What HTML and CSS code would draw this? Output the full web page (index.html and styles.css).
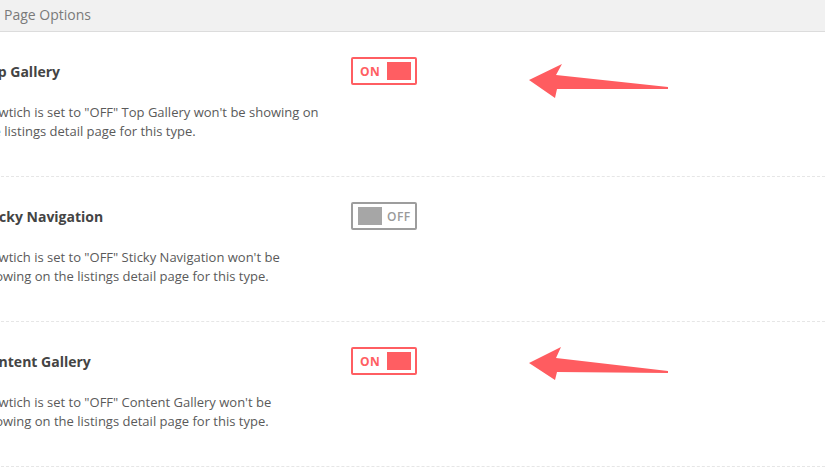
FILE: index.html
```html
<!DOCTYPE html>
<html>
<head>
<meta charset="utf-8">
<link rel="stylesheet" href="styles.css">
</head>
<body>
<div class="panel">
  <div class="panel-header">Page Options</div>
  <div class="panel-body">
    <div class="option">
      <div class="option-head">
        <div class="option-title">Top Gallery</div>
        <div class="toggle on"><span class="toggle-label">ON</span><span class="toggle-knob"></span></div>
      </div>
      <p class="option-desc">If swtich is set to "OFF" Top Gallery won't be showing on the listings detail page for this type.</p>
    </div>
    <div class="option">
      <div class="option-head">
        <div class="option-title">Sticky Navigation</div>
        <div class="toggle off"><span class="toggle-knob"></span><span class="toggle-label">OFF</span></div>
      </div>
      <p class="option-desc">If swtich is set to "OFF" Sticky Navigation won't be showing on the listings detail page for this type.</p>
    </div>
    <div class="option">
      <div class="option-head">
        <div class="option-title">Content Gallery</div>
        <div class="toggle on"><span class="toggle-label">ON</span><span class="toggle-knob"></span></div>
      </div>
      <p class="option-desc">If swtich is set to "OFF" Content Gallery won't be showing on the listings detail page for this type.</p>
    </div>
  </div>
  <svg class="arrow arrow-1" width="150" height="40" viewBox="0 0 150 40">
    <polygon points="1,16 34,0 28,11 140,23 140,25 29,25 27,34" />
  </svg>
  <svg class="arrow arrow-2" width="150" height="40" viewBox="0 0 150 40">
    <polygon points="1,16 33,0 28,11 140,24 140,26 29,25 27,33" />
  </svg>
</div>
</body>
</html>
```
FILE: styles.css
```css
html, body {
  margin: 0;
  padding: 0;
  background: #ffffff;
}
body {
  font-family: "Open Sans", "Liberation Sans", sans-serif;
  overflow: hidden;
  width: 825px;
  height: 470px;
}
.panel {
  position: relative;
}
.panel-header {
  height: 31px;
  line-height: 29px;
  background: #f1f1f1;
  border-bottom: 1px solid #dcdcdc;
  padding-left: 4px;
  font-size: 14px;
  color: #7a7a7a;
}
.panel-body {
  margin-left: -19px;
}
.option {
  padding: 25px 0 35px;
  border-bottom: 1px dashed #e6e6e6;
  height: 84px;
}
.option-head {
  display: flex;
  align-items: center;
  height: 28px;
}
.option-title {
  width: 370px;
  font-size: 14px;
  font-weight: 700;
  color: #444;
}
.option-desc {
  margin: 18px 0 0;
  max-width: 340px;
  font-size: 13px;
  line-height: 19px;
  color: #5a5a5a;
}
.toggle {
  box-sizing: border-box;
  width: 66px;
  height: 28px;
  border: 2px solid;
  border-radius: 2px;
  display: flex;
  align-items: center;
  padding: 3px 4px;
  font-size: 12px;
  letter-spacing: 0.5px;
}
.toggle-knob {
  width: 24px;
  height: 18px;
}
.toggle.on {
  border-color: #ff5e62;
  color: #ff5e62;
}
.toggle.on .toggle-label {
  margin-left: 3px;
  font-weight: 700;
}
.toggle.on .toggle-knob {
  margin-left: auto;
  background: #ff5e62;
}
.toggle.off {
  border-color: #9d9d9d;
  color: #9a9a9a;
}
.toggle.off .toggle-knob {
  margin-left: 1px;
  background: #a6a6a6;
}
.toggle.off .toggle-label {
  margin-left: 5px;
  font-weight: 600;
}
.arrow {
  position: absolute;
  left: 528px;
  fill: #ff5c60;
  filter: blur(0.5px);
}
.arrow-1 {
  top: 64px;
}
.arrow-2 {
  top: 347px;
}
```
